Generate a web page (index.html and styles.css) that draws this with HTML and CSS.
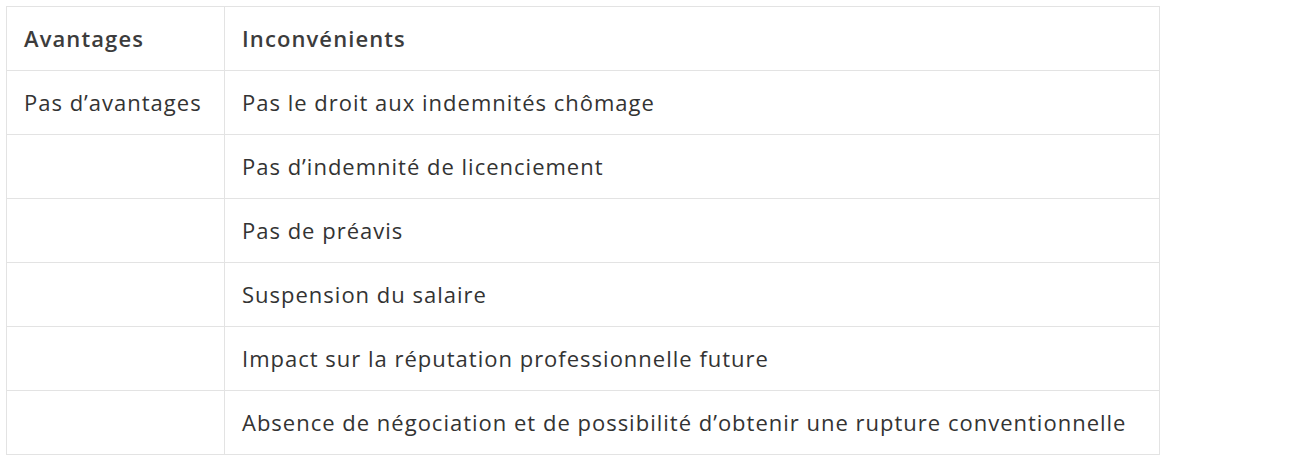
FILE: index.html
```html
<!DOCTYPE html>
<html lang="fr">
<head>
<meta charset="utf-8">
<link rel="stylesheet" href="styles.css">
</head>
<body>
<table class="cmp">
  <thead>
    <tr><th class="c1">Avantages</th><th>Inconvénients</th></tr>
  </thead>
  <tbody>
    <tr><td class="c1">Pas d’avantages</td><td>Pas le droit aux indemnités chômage</td></tr>
    <tr><td class="c1"></td><td>Pas d’indemnité de licenciement</td></tr>
    <tr><td class="c1"></td><td>Pas de préavis</td></tr>
    <tr><td class="c1"></td><td>Suspension du salaire</td></tr>
    <tr><td class="c1"></td><td>Impact sur la réputation professionnelle future</td></tr>
    <tr><td class="c1"></td><td>Absence de négociation et de possibilité d’obtenir une rupture conventionnelle</td></tr>
  </tbody>
</table>
</body>
</html>
```
FILE: styles.css
```css
html, body { margin: 0; padding: 0; background: #fff; }
body { padding: 6px; font-family: "Open Sans", sans-serif; color: #333; }
.cmp { border-collapse: collapse; width: 1154px; table-layout: fixed; }
.cmp th, .cmp td {
  border: 1px solid #e3e3e3;
  height: 64px;
  padding: 0 17px 2px;
  text-align: left;
  font-size: 22px;
  font-weight: 400;
  letter-spacing: 1px;
  vertical-align: middle;
  box-sizing: border-box;
  white-space: nowrap;
}
.cmp th { font-weight: 600; color: #3c3c3c; letter-spacing: 1.1px; }
.cmp .c1 { width: 218px; }
```
